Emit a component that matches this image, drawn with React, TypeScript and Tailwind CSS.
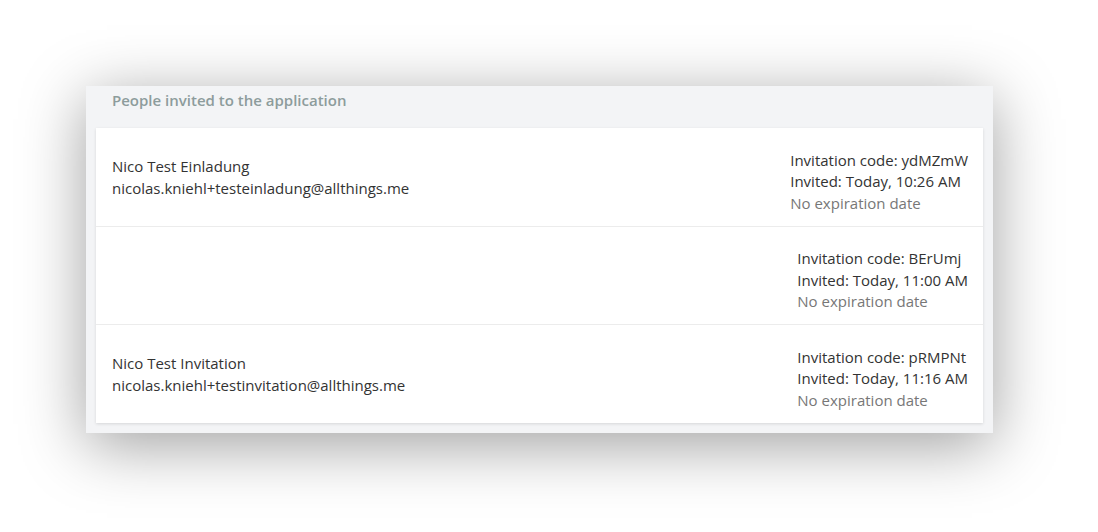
import React from "react";

type Invite = {
  name?: string;
  email?: string;
  code: string;
  invited: string;
};

const invites: Invite[] = [
  {
    name: "Nico Test Einladung",
    email: "nicolas.kniehl+testeinladung@allthings.me",
    code: "ydMZmW",
    invited: "Today, 10:26 AM",
  },
  { code: "BErUmj", invited: "Today, 11:00 AM" },
  {
    name: "Nico Test Invitation",
    email: "nicolas.kniehl+testinvitation@allthings.me",
    code: "pRMPNt",
    invited: "Today, 11:16 AM",
  },
];

function InviteRow({ invite, first, last }: { invite: Invite; first: boolean; last: boolean }) {
  return (
    <div
      className={`flex items-center justify-between pl-4 pr-[15px] ${
        first ? "h-[98px]" : "border-t border-[#ececec]"
      } ${!first && last ? "h-[99px]" : ""} ${!first && !last ? "h-[98px]" : ""}`}
    >
      {/* who */}
      <div className="flex flex-col text-[15px] leading-[22px] text-[#333]">
        {invite.name && <span>{invite.name}</span>}
        {invite.email && <span>{invite.email}</span>}
      </div>

      {/* invitation details */}
      <div className="flex flex-col pt-[10px] text-[15px] leading-[21.5px]">
        <span className="text-[#333]">Invitation code: {invite.code}</span>
        <span className="text-[#333]">Invited: {invite.invited}</span>
        <span className="text-[#777]">No expiration date</span>
      </div>
    </div>
  );
}

export default function App() {
  return (
    <div
      className="min-h-[532px] w-full bg-white pl-[86px] pt-[86px]"
      style={{ fontFamily: '"Open Sans", "Noto Sans", sans-serif' }}
    >
      <div className="w-[907px] bg-[#f3f4f6] px-[10px] pb-[10px] shadow-[0_12px_60px_rgba(0,0,0,0.38)]">
        <div className="h-[42px] px-4 pt-[3px] text-[15px] font-semibold leading-[22px] text-[#8d9c9c]">
          People invited to the application
        </div>
        <div className="bg-white shadow-[0_1px_3px_rgba(0,0,0,0.12)]">
          {invites.map((inv, i) => (
            <InviteRow key={inv.code} invite={inv} first={i === 0} last={i === invites.length - 1} />
          ))}
        </div>
      </div>
    </div>
  );
}
